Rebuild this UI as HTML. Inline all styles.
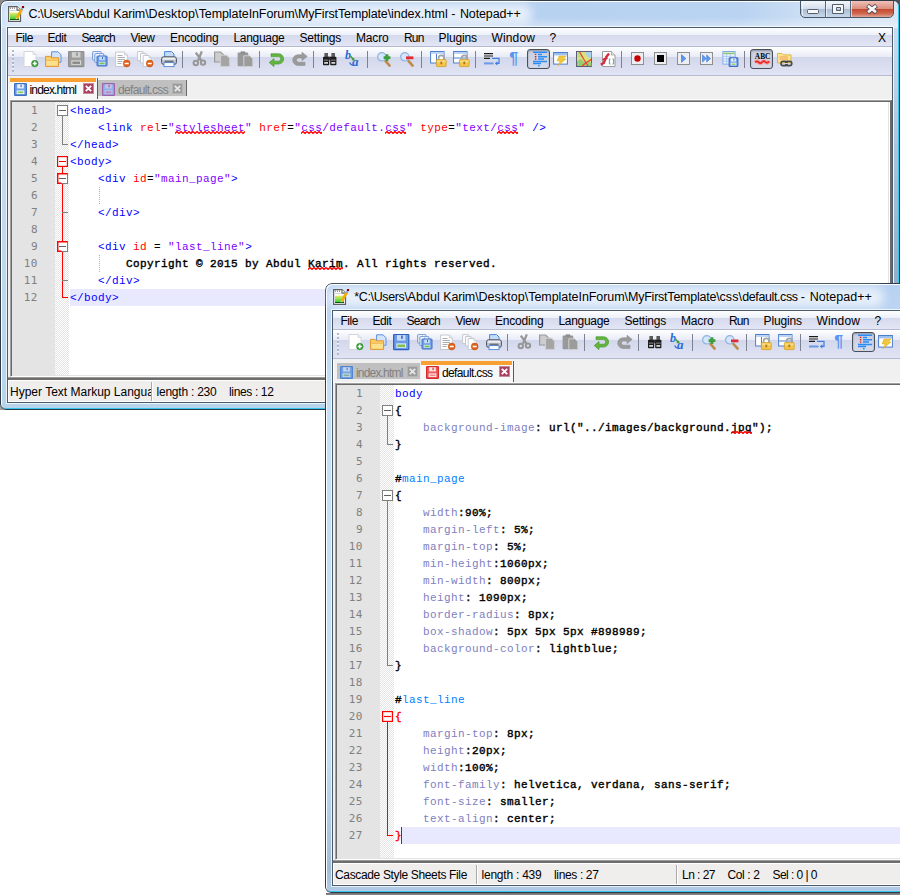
<!DOCTYPE html><html><head><meta charset="utf-8"><title>Notepad++</title><style>html,body{margin:0;padding:0}
body{width:900px;height:895px;overflow:hidden;background:#fff;position:relative;font-family:"Liberation Sans",sans-serif;font-size:12px;color:#000}
i{font-style:normal;display:block;position:absolute}
.win{position:absolute;overflow:hidden;border-radius:7px 7px 6px 6px}
.frame{position:absolute;left:0;top:0;right:0;bottom:0;box-sizing:border-box;border:1px solid #2f3b48;border-radius:7px 7px 6px 6px;
 box-shadow:inset 1px 1px 0 0 #fdfeff, inset -1px -1px 0 0 #35c6ee;
 background:linear-gradient(180deg,#dfeaf6 0,#d3e2f3 28px,#c3d9ee 120px,#b9d6ec 100%)}
#w1 .frame{background:linear-gradient(180deg,rgba(150,172,200,0) 0,rgba(150,172,200,.0) 20px,rgba(150,172,200,1) 280px) 893px 0/6px 100% no-repeat,linear-gradient(180deg,rgba(255,255,255,0) 0,rgba(255,255,255,0) 16px,rgba(255,255,255,.4) 27px) 0 0/100% 27px no-repeat,linear-gradient(90deg,#bcd5f2 0,#b7d1f1 560px,#b9d3f1 740px,#cbdef4 800px,#d9e6f6 880px) 0 0/100% 27px no-repeat,linear-gradient(180deg,#d6e4f4 0,#c9dcf1 28px,#c6dbf0 120px,#b6d5ec 100%)}
#w2 .frame{background:linear-gradient(180deg,#b7d1f1 0,#bdd5f2 28px,#c5dff6 120px,#c5dff6 470px,#a3bcd8 585px,#b2cce8 100%)}
.ticon{position:absolute;left:8px;top:6px}
.t{position:absolute;white-space:pre;line-height:16px;height:16px}
.ttl{font-size:12.5px}
.client{position:absolute;left:7px;top:27px;border:1px solid #4a5b6c;background:#f0f0f0;overflow:hidden;box-shadow:0 0 0 1px rgba(255,255,255,.75)}
.menubar{position:absolute;left:0;top:0;right:0;height:18px;background:linear-gradient(180deg,#fefeff 0,#ecf0f9 7px,#d5d9ec 7px,#e2e6f5 18px);border-bottom:1px solid #b6bad0}
.toolbar{position:absolute;left:0;top:19px;right:0;height:28px;background:linear-gradient(180deg,#ffffff 0,#e8ebf7 10px,#d3d7eb 10px,#e0e4f4 28px);border-bottom:1px solid #b6bad0}
.grip{left:4px;top:3px;width:3px;height:22px;background:repeating-linear-gradient(180deg,#b2b7cc 0,#b2b7cc 2px,rgba(255,255,255,.7) 2px,rgba(255,255,255,.7) 3px,transparent 3px,transparent 4px);width:2px}
.tabbar{position:absolute;left:0;top:48px;right:0;height:23px;background:#f0f0f0;border-left:1px solid #fff;border-bottom:1px solid #fbfbfb}
.tbi{position:absolute;left:0;top:0}
.ic{position:absolute;top:51px;overflow:visible}
.sep{top:51px;width:1px;height:17px;background:#7d8192}
.actbtn{top:49px;width:21px;height:18px;border:1px solid #4a4f5c;border-radius:3px;background:linear-gradient(180deg,#c9cfe0,#d6dbea);box-shadow:inset 0 1px 2px rgba(0,0,0,.3)}
.tab{position:absolute;box-sizing:border-box}
.tab.act{top:78px;height:21px;background:#f8f8f8;border-right:1px solid #5a5a5a}
.tab.act .or{left:0;top:0;right:1px;height:4px;background:#f9a033}
.tab.ina{top:80px;height:16px;background:#c0c0c0;border-right:1px solid #6a6a6a}
.tic{position:absolute;top:83px}
.tcl{position:absolute;top:83px}
.tb{font-size:12px}
.tbi2{color:#808080}
.edb{position:absolute;left:10px;top:100px;box-sizing:border-box;border:1px solid #a0a0a0;border-right:2px solid #6a6a6a;border-bottom-color:#fff;background:#fff;box-shadow:inset 1px 1px 0 0 #696969}
.ed{position:absolute;left:12px;top:102px;background:#fff;overflow:hidden;box-shadow:1px 0 0 #e3e3e3,0 1px 0 #e3e3e3}
.lnm{position:absolute;left:0;top:0;width:43px;background:#e4e4e4}
.fdm{position:absolute;left:43px;top:0;width:14px;background:repeating-conic-gradient(#ffffff 0 25%,#e4e4e4 0 50%) 0 0/2px 2px}
.cur{left:58px;right:0;height:17px;background:#e8e8ff}
.ln{position:absolute;left:0;width:26px;letter-spacing:.5px;text-align:right;font-family:"DejaVu Sans Mono",monospace;font-size:11px;line-height:17px;height:17px;color:#808080}
.cl{position:absolute;left:58px;margin-top:1px;white-space:pre;font-family:"Liberation Mono",monospace;font-size:11px;letter-spacing:.4px;line-height:17px;height:17px;color:#000}
.tg{color:#0000ff}.at{color:#ff0000}.st{color:#8000ff}.eq{color:#000}
.tx,.op,.vl,.br{font-weight:normal;color:#000;-webkit-text-stroke:.4px #000}
.br{color:#ff0000;-webkit-text-stroke:.4px #ff0000}
.pr{color:#8080c0}.idn{color:#0080ff}
.sq{position:relative;display:inline-block}.sqv{position:absolute;left:0;top:11px}
.caret{display:inline-block;position:relative;width:1px;height:17px;background:#8000ff;vertical-align:top;top:-1px;margin-left:-1px}
.ig{width:1px;background:repeating-linear-gradient(180deg,#b0b0b0 0,#b0b0b0 1px,transparent 1px,transparent 2px)}
.fold{position:absolute;left:43px;top:0;width:14px}
.fb{position:absolute;left:2px}
.fv{left:7px;width:1px}
.fh{left:7px;height:1px}
.sb{position:absolute;left:8px;height:24px;box-sizing:border-box;background:#f0eded;border-top:2px solid #828282;border-image:linear-gradient(180deg,#6c6c6c,#a4a4a4) 1;box-shadow:inset 0 1px 0 #fff, inset 0 -1px 0 #fff, inset 1px 0 0 #fff, 0 -1px 0 #9a9a9a}
.sbsep{top:2px;width:1px;height:19px;background:#a9a9a9;box-shadow:1px 0 0 #fff}
.sbclip{position:absolute;top:0;height:22px;overflow:hidden}
.capbtns{position:absolute;left:800px;top:0}
.glow{left:2px;top:4px;height:20px;background:rgba(255,255,255,.66);border-radius:9px;filter:blur(5px)}

.btm{left:326px;top:893px;width:575px;height:2px;background:linear-gradient(180deg,#6a6a6a,#8c8c8c)}
.brw{background:#fff;display:inline-block;height:17px;line-height:17px;position:relative;top:-1px;padding-top:1px;box-sizing:border-box;vertical-align:top}
.cnr{width:7px;height:7px}
</style></head><body><svg width="0" height="0" style="position:absolute"><defs><linearGradient id="gg" x1="0" y1="0" x2="0" y2="1"><stop offset="0" stop-color="#e4ec5a"/><stop offset=".35" stop-color="#a6e25a"/><stop offset=".8" stop-color="#4fd03a"/><stop offset=".86" stop-color="#0a6a0a"/><stop offset="1" stop-color="#005000"/></linearGradient></defs></svg><i class="cnr" style="left:0;top:0;background:#8a8a8a"></i><i class="cnr" style="left:893px;top:0;background:#4c5157"></i><i class="cnr" style="left:0;top:403px;background:#a0a0a0"></i><div class="win" id="w1" style="left:0px;top:0px;width:900px;height:410px"><div class="frame"></div><i class="glow" style="width:530px"></i><svg class="ticon" width="17" height="17" viewBox="0 0 17 17"><path d="M.6 .6h8.400l3.500 3.500v11.300h-11.900z" fill="#fff" stroke="#5f5f5f" stroke-width="1.200"/><path d="M9 .6v3.500h3.500" fill="#fff" stroke="#5f5f5f" stroke-width="1.100"/><circle cx="2.400" cy="2.100" r=".6" fill="#555"/><circle cx="4.400" cy="2.100" r=".6" fill="#555"/><circle cx="6.500" cy="2.100" r=".6" fill="#555"/><path d="M2 4.500h5.500" stroke="#c9d2da" stroke-width="1"/><rect x="2" y="6.700" width="9" height="7.300" fill="url(#gg)"/><path d="M8.700 12.300l5-8.800" stroke="#f6aa08" stroke-width="2.700"/><path d="M7.700 13.700l.300-2.200 1.900 1.100z" fill="#e8cf9a"/><path d="M7.700 13.700l.2-1 .8.500z" fill="#3a3020"/><path d="M13.500 3.900l.9-1.600" stroke="#8ea6c6" stroke-width="2.500"/><rect x="13.900" y="0" width="2.200" height="2.100" fill="#8a0000"/></svg><span class="t ttl" style="left:28.5px;top:6px;letter-spacing:-0.333px;">C:\Users\</span><span class="t ttl" style="left:77.6px;top:6px;letter-spacing:0.024px;">Abdul </span><span class="t ttl" style="left:113.2px;top:6px;letter-spacing:-0.138px;">Karim\</span><span class="t ttl" style="left:148.5px;top:6px;letter-spacing:0.107px;">Desktop\</span><span class="t ttl" style="left:198.7px;top:6px;letter-spacing:-0.096px;">TemplateInForum\</span><span class="t ttl" style="left:297.9px;top:6px;letter-spacing:-0.129px;">MyFirstTemplate\</span><span class="t ttl" style="left:391.0px;top:6px;letter-spacing:-0.023px;">index.html </span><span class="t ttl" style="left:451.2px;top:6px;letter-spacing:0.530px;">- </span><span class="t ttl" style="left:459.9px;top:6px;letter-spacing:-0.118px;">Notepad++</span><svg class="capbtns" width="94" height="19" viewBox="0 0 94 19"><defs><linearGradient id="cg1" x1="0" y1="0" x2="0" y2="1"><stop offset="0" stop-color="#f3f7fb"/><stop offset=".48" stop-color="#d3deec"/><stop offset=".5" stop-color="#a9bcd4"/><stop offset="1" stop-color="#c9d8ea"/></linearGradient><linearGradient id="cg2" x1="0" y1="0" x2="0" y2="1"><stop offset="0" stop-color="#efc0b6"/><stop offset=".48" stop-color="#dc8f80"/><stop offset=".5" stop-color="#c4472c"/><stop offset=".8" stop-color="#cf6a52"/><stop offset="1" stop-color="#e3a898"/></linearGradient><clipPath id="cc"><path d="M1 1h92v12a4 4 0 0 1-4 4h-84a4 4 0 0 1-4-4z"/></clipPath></defs><g clip-path="url(#cc)"><rect x="1" y="1" width="50" height="16" fill="url(#cg1)"/><rect x="51" y="1" width="42" height="16" fill="url(#cg2)"/><path d="M1.500 1v16M25.500 1v16M50.500 1v16" stroke="#f4f8fc" stroke-width="1" opacity=".7" transform="translate(1,0)"/></g><path d="M.5 1v12a4.500 4.500 0 0 0 4.500 4.500h84a4.500 4.500 0 0 0 4.500-4.500v-12" fill="none" stroke="#48566a" stroke-width="1"/><path d="M25.500 1v16.500M50.500 1v16.500" stroke="#5a687c" stroke-width="1"/><rect x="7.500" y="9.500" width="11" height="4" rx="1" fill="#f6f6f6" stroke="#535e6e" stroke-width="1"/><path d="M32.500 4.500h11v9h-11zM36.500 7.500v3h4v-3z" fill="#f6f6f6" fill-rule="evenodd" stroke="#535e6e" stroke-width="1"/><path d="M67.500 5.500l9 7M76.500 5.500l-9 7" stroke="#4e4450" stroke-width="4.400"/><path d="M68 5.900l8 6.200M76 5.900l-8 6.200" stroke="#f8f8f8" stroke-width="2.600"/></svg><div class="client" style="width:884px;height:374px"><div class="menubar"></div><div class="toolbar"><i class="grip"></i></div><div class="tabbar"></div></div><span class="t mn" style="left:15.5px;top:30px;letter-spacing:-0.461px;">File</span><span class="t mn" style="left:47.5px;top:30px;letter-spacing:-0.422px;">Edit</span><span class="t mn" style="left:81.5px;top:30px;letter-spacing:-0.755px;">Search</span><span class="t mn" style="left:130.5px;top:30px;letter-spacing:-0.449px;">View</span><span class="t mn" style="left:170px;top:30px;letter-spacing:-0.193px;">Encoding</span><span class="t mn" style="left:233.5px;top:30px;letter-spacing:-0.299px;">Language</span><span class="t mn" style="left:299.5px;top:30px;letter-spacing:-0.232px;">Settings</span><span class="t mn" style="left:356px;top:30px;letter-spacing:-0.169px;">Macro</span><span class="t mn" style="left:404px;top:30px;letter-spacing:-0.839px;">Run</span><span class="t mn" style="left:438.5px;top:30px;letter-spacing:-0.123px;">Plugins</span><span class="t mn" style="left:491.5px;top:30px;letter-spacing:0.135px;">Window</span><span class="t mn" style="left:549.5px;top:30px;letter-spacing:-2.188px;">?</span><span class="t mn" style="left:878px;top:30px;letter-spacing:0.484px;">X</span><div class="tbi"><svg class="ic" style="left:23px" width="16" height="16" viewBox="0 0 16 16"><path d="M1 0.5h9l3 3v12h-12z" fill="#ffffff" stroke="#d4d6dc" stroke-width="1"/><path d="M10 0.5v3h3" fill="#e8e8e8" stroke="#d4d6dc" stroke-width=".8"/><circle cx="11.8" cy="12.6" r="3.3" fill="#3c9e38" stroke="#2f8030" stroke-width=".5"/><path d="M9.800 12.600h4M11.800 10.600v4" stroke="#fff" stroke-width="1.500"/></svg><svg class="ic" style="left:46px" width="16" height="16" viewBox="0 0 16 16"><path d="M5.600 .8h6.400l3 3v7.400h-9.400z" fill="#d3e3fb" stroke="#5f90dc" stroke-width="1"/><path d="M-.4 5.400h4.600l1.200 1.400h7.200v8.600h-13z" fill="#f8cf6a" stroke="#e0962c" stroke-width="1"/><path d="M.4 9.400h11.400v5.200h-11.400z" fill="#fbe08e"/><path d="M.4 9.400h11.400" stroke="#f3b44c" stroke-width=".8"/></svg><svg class="ic" style="left:69px" width="16" height="16" viewBox="0 0 16 16"><rect x="-0.4" y="0.5" width="15.2" height="15.2" rx=".6" fill="#9c9c9c" stroke="#8f8f8f" stroke-width="1.2"/><rect x="2.94" y="1.1" width="8.51" height="5.47" fill="#d8d8d8" opacity=".85"/><rect x="7.20" y="1.5" width="1.52" height="3.34" fill="#8f8f8f"/><rect x="2.34" y="9.32" width="9.73" height="4.56" fill="#d8d8d8"/><rect x="3.40" y="10.53" width="7.60" height="2.43" fill="#8a8a8a"/></svg><svg class="ic" style="left:92px" width="16" height="16" viewBox="0 0 16 16"><rect x="0.6" y="0.6" width="8.5" height="8.5" rx=".6" fill="#e6eefa" stroke="#6a92d4" stroke-width="0.9"/><rect x="2.47" y="1.2" width="4.76" height="3.06" fill="#ffffff" opacity=".85"/><rect x="4.85" y="1.6" width="0.85" height="1.87" fill="#6a92d4"/><rect x="2.13" y="5.53" width="5.44" height="2.55" fill="#ffffff"/><rect x="2.73" y="6.21" width="4.25" height="1.36" fill="#e6eefa"/><rect x="2.8" y="2.6" width="9" height="9" rx=".6" fill="#e6eefa" stroke="#6a92d4" stroke-width="0.9"/><rect x="4.78" y="3.2" width="5.04" height="3.24" fill="#ffffff" opacity=".85"/><rect x="7.30" y="3.6" width="0.90" height="1.98" fill="#6a92d4"/><rect x="4.42" y="7.82" width="5.76" height="2.70" fill="#ffffff"/><rect x="5.05" y="8.54" width="4.50" height="1.44" fill="#e6eefa"/><rect x="5" y="5" width="10" height="10" rx=".6" fill="#6f9fe6" stroke="#3f72c4" stroke-width="1"/><rect x="7.20" y="5.6" width="5.60" height="3.60" fill="#d8e6fa" opacity=".85"/><rect x="10.00" y="6" width="1.00" height="2.20" fill="#3f72c4"/><rect x="6.80" y="10.80" width="6.40" height="3.00" fill="#d8e6fa"/><rect x="7.50" y="11.60" width="5.00" height="1.60" fill="#7cc04a"/></svg><svg class="ic" style="left:115px" width="16" height="16" viewBox="0 0 16 16"><path d="M0.6 1h8.8l3 3v11.5h-11.8z" fill="#ffffff" stroke="#c6c8cf" stroke-width="1"/><path d="M9.4 1v3h3" fill="#e8e8e8" stroke="#c6c8cf" stroke-width=".8"/><path d="M2.500 4.500h5M2.500 6.500h7.500M2.500 8.500h7.500M2.500 10.500h5M2.500 12.500h4" stroke="#a4a4a8" stroke-width=".9"/><circle cx="11.700" cy="12.500" r="3.400" fill="#e4631a" stroke="#c0500e" stroke-width=".6"/><path d="M9.700 12.500h4" stroke="#fff" stroke-width="1.500"/></svg><svg class="ic" style="left:138px" width="16" height="16" viewBox="0 0 16 16"><path d="M-0.4 0.6h5.3l2.2 2.2v6.8h-7.5z" fill="#ffffff" stroke="#c6c8cf" stroke-width="1"/><path d="M4.8999999999999995 0.6v2.2h2.2" fill="#e8e8e8" stroke="#c6c8cf" stroke-width=".8"/><path d="M2.5 2.5h5.3l2.2 2.2v7.3h-7.5z" fill="#ffffff" stroke="#c6c8cf" stroke-width="1"/><path d="M7.8 2.5v2.2h2.2" fill="#e8e8e8" stroke="#c6c8cf" stroke-width=".8"/><path d="M5.2 4.5h5.8l2.2 2.2v8.8h-8z" fill="#ffffff" stroke="#c6c8cf" stroke-width="1"/><path d="M11.0 4.5v2.2h2.2" fill="#e8e8e8" stroke="#c6c8cf" stroke-width=".8"/><circle cx="11.700" cy="12.500" r="3.400" fill="#e4631a" stroke="#c0500e" stroke-width=".6"/><path d="M9.700 12.500h4" stroke="#fff" stroke-width="1.500"/></svg><svg class="ic" style="left:161px" width="16" height="16" viewBox="0 0 16 16"><path d="M3.600 .6h7l2.400 2.400v4h-9.400z" fill="#c4dcfa" stroke="#4f86d8" stroke-width="1"/><rect x=".6" y="5.800" width="14.800" height="7.600" rx="2" fill="#c4c8d0" stroke="#4a505c" stroke-width="1"/><rect x="1.600" y="6.800" width="12.800" height="2" rx="1" fill="#eceef2"/><rect x="3" y="11.600" width="10" height="4" fill="#f8fbff" stroke="#4f86d8" stroke-width=".9"/><rect x="3.600" y="9.600" width="8.800" height="1.600" fill="#6a707c"/></svg><i class="sep" style="left:182px"></i><svg class="ic" style="left:192px" width="16" height="16" viewBox="0 0 16 16"><path d="M9.800 .4L6 9.800M3.800 1.600l5.800 8" stroke="#979797" stroke-width="2.300" fill="none"/><circle cx="3.800" cy="12" r="2.200" fill="none" stroke="#979797" stroke-width="2"/><circle cx="11" cy="11.600" r="2.200" fill="none" stroke="#979797" stroke-width="2"/></svg><svg class="ic" style="left:215px" width="16" height="16" viewBox="0 0 16 16"><path d="M-.4 1h6l3 3v7h-9z" fill="#cdcdcd" stroke="#9a9a9a" stroke-width="1.200"/><path d="M5.600 4.200h6l3 3v8.200h-9z" fill="#a4a4a4" stroke="#cfcfcf" stroke-width="1"/></svg><svg class="ic" style="left:238px" width="16" height="16" viewBox="0 0 16 16"><rect x="-.4" y="1.400" width="10.600" height="13.800" rx="1" fill="#999999"/><rect x="2.600" y=".4" width="4.600" height="2.400" fill="#8c8c8c"/><path d="M5.800 4.800h6l3 3v7.800h-9z" fill="#9c9c9c" stroke="#d0d0d0" stroke-width="1"/></svg><i class="sep" style="left:259px"></i><svg class="ic" style="left:269px" width="16" height="16" viewBox="0 0 16 16"><path d="M.2 11.600L5 7.600V10.200H9.500A2.300 2.300 0 0 0 9.500 5.600H2V2.800H9.500A5.100 5.100 0 0 1 9.500 13H5V15.600Z" fill="#63b53e" stroke="#479a2c" stroke-width=".7"/></svg><svg class="ic" style="left:292px" width="16" height="16" viewBox="0 0 16 16"><path d="M15.200 5.400L10 1.200V3.800H6A5.300 5.300 0 0 0 6 14.400H13V11.200H6.500A2.100 2.100 0 0 1 6.500 7H10V9.600Z" fill="#9a9a9a" stroke="#8e8e8e" stroke-width=".6"/></svg><i class="sep" style="left:313px"></i><svg class="ic" style="left:323px" width="16" height="16" viewBox="0 0 16 16"><rect x="1.400" y="2" width="3.600" height="4.400" fill="#5a5a5a"/><rect x="8.400" y="2" width="3.600" height="4.400" fill="#5a5a5a"/><rect x="5.200" y="5.600" width="3" height="3.600" fill="#444"/><rect x="0" y="5.800" width="6.200" height="8.400" rx=".8" fill="#1c1c1c"/><rect x="7.200" y="5.800" width="6.200" height="8.400" rx=".8" fill="#1c1c1c"/><rect x=".8" y="8.600" width="4.600" height="1" fill="#8a8a8a"/><rect x="8" y="8.600" width="4.600" height="1" fill="#8a8a8a"/><rect x="1.200" y="11" width="3.800" height="1.800" fill="#d4d4d4"/><rect x="8.400" y="11" width="3.800" height="1.800" fill="#d4d4d4"/></svg><svg class="ic" style="left:346px" width="16" height="16" viewBox="0 0 16 16"><text x="-1" y="7.800" font-family="Liberation Serif,serif" font-size="12" font-weight="bold" font-style="italic" fill="#2a6ad8">b</text><text x="6" y="15" font-family="Liberation Serif,serif" font-size="13" font-weight="bold" font-style="italic" fill="#2a6ad8">a</text><path d="M4.400 5l3 3.400" stroke="#3f9a3a" stroke-width="1.500"/><path d="M8.800 9.800l-3.400-.8 2.600-2.400z" fill="#3f9a3a"/><path d="M3.600 11.500q1.600 3.400 4.200 2.600" stroke="#2a6ad8" stroke-width="1.200" fill="none"/></svg><i class="sep" style="left:367px"></i><svg class="ic" style="left:377px" width="16" height="16" viewBox="0 0 16 16"><circle cx="4.800" cy="5.800" r="4.200" fill="#d3e6fb" stroke="#8fb2e0" stroke-width="1.200"/><path d="M8.600 10.200l4 4.400" stroke="#bd8c48" stroke-width="2.600" stroke-linecap="round"/><path d="M6.600 6.600h6.800M10 3.200v6.800" stroke="#3c9e3c" stroke-width="2.800"/></svg><svg class="ic" style="left:400px" width="16" height="16" viewBox="0 0 16 16"><circle cx="4.800" cy="5.800" r="4.200" fill="#d3e6fb" stroke="#8fb2e0" stroke-width="1.200"/><path d="M8.600 10.200l4 4.400" stroke="#bd8c48" stroke-width="2.600" stroke-linecap="round"/><path d="M6 6.800h7.400" stroke="#e02a34" stroke-width="2.800"/></svg><i class="sep" style="left:421px"></i><svg class="ic" style="left:431px" width="16" height="16" viewBox="0 0 16 16"><rect x="-.4" y=".5" width="13.400" height="11.500" fill="#fff" stroke="#4f7fcf" stroke-width="1"/><rect x=".1" y="1" width="12.400" height="2" fill="#bcd5f4"/><path d="M5.500 3v9" stroke="#4f7fcf" stroke-width="1"/><path d="M7.6000000000000005 9.0v-2a2.700 2.700 0 0 1 5.400 0v2" fill="none" stroke="#a4a4a4" stroke-width="1.700"/><rect x="5.4" y="8.6" width="9.800" height="7" rx=".8" fill="#f4c44a" stroke="#d39e22" stroke-width=".8"/><rect x="6.2" y="9.399999999999999" width="8.200" height="2" fill="#f9dc8a"/><rect x="9.4" y="10.6" width="1.800" height="2.600" fill="#a87b10"/></svg><svg class="ic" style="left:454px" width="16" height="16" viewBox="0 0 16 16"><rect x="-.4" y=".5" width="13.400" height="11.500" fill="#fff" stroke="#4f7fcf" stroke-width="1"/><rect x=".1" y="1" width="12.400" height="2" fill="#bcd5f4"/><path d="M-.4 7h13.400" stroke="#4f7fcf" stroke-width="1"/><path d="M7.6000000000000005 9.0v-2a2.700 2.700 0 0 1 5.400 0v2" fill="none" stroke="#a4a4a4" stroke-width="1.700"/><rect x="5.4" y="8.6" width="9.800" height="7" rx=".8" fill="#f4c44a" stroke="#d39e22" stroke-width=".8"/><rect x="6.2" y="9.399999999999999" width="8.200" height="2" fill="#f9dc8a"/><rect x="9.4" y="10.6" width="1.800" height="2.600" fill="#a87b10"/></svg><i class="sep" style="left:475px"></i><svg class="ic" style="left:485px" width="16" height="16" viewBox="0 0 16 16"><path d="M-1 2.600h9M-1 5h9M-1 7.400h6" stroke="#1a1a1a" stroke-width="1.200"/><path d="M-1 12.400h9.500" stroke="#6b9be6" stroke-width="2"/><path d="M7 7.400h7v5h-2.500" fill="none" stroke="#3f7be0" stroke-width="1.200"/><path d="M9.800 12.400l2.600-2.200v4.400z" fill="#3f7be0"/></svg><svg class="ic" style="left:508px" width="16" height="16" viewBox="0 0 16 16"><text x="1.200" y="13.400" font-family="Liberation Sans,sans-serif" font-size="16" font-weight="bold" fill="#5896f2">¶</text></svg><i class="actbtn" style="left:527px"></i><svg class="ic" style="left:531px" width="16" height="16" viewBox="0 0 16 16"><path d="M2 1.300h14M7 3.500h4M7 5.700h9M7 8h6M2 10.400h14M2 12.600h8M7 14.700h1.600" stroke="#2a8cf8" stroke-width="1.500"/><path d="M4.600 2.800v7" stroke="#e01919" stroke-width="1.500" stroke-dasharray="1.300 1"/></svg><svg class="ic" style="left:554px" width="16" height="16" viewBox="0 0 16 16"><rect x="-.4" y="1.500" width="13.800" height="11.600" fill="#fff" stroke="#4b7dcd" stroke-width="1"/><rect x=".1" y="2" width="12.800" height="2.400" fill="#9dc0f0"/><path d="M5 5h7l-2.600 3h2.600l-8 6.800 2.200-4.800h-3.200z" fill="#f0c83c" stroke="#d8a820" stroke-width=".5"/></svg><svg class="ic" style="left:577px" width="16" height="16" viewBox="0 0 16 16"><rect x="-.5" y=".5" width="15" height="15" fill="#dbe27a" stroke="#50506e" stroke-width=".9"/><path d="M0 10l4-2 3 3 4-1 3.500 2v3h-14.500z" fill="#98cc74"/><path d="M8 1h6.500v5.500l-3 .5-2-3z" fill="#a9d2ee"/><path d="M0 1h4l2 4-3 2-3-1z" fill="#c4dc84"/><path d="M2.600 1l4 7 4.400 7M14 8.600l-5 3.200-4 3.200" stroke="#e8483a" stroke-width="1.300" fill="none"/></svg><svg class="ic" style="left:600px" width="16" height="16" viewBox="0 0 16 16"><path d="M2.5 0.5h9.0l3.5 3.5v11.5h-12.5z" fill="#ffffff" stroke="#9c9c9c" stroke-width="1"/><path d="M11.5 0.5v3.5h3.5" fill="#e8e8e8" stroke="#9c9c9c" stroke-width=".8"/><path d="M.8 13.600l3-1.600 2.400-6 2.800-3.600" fill="none" stroke="#dc2a3a" stroke-width="2.400"/><path d="M2.600 8.600l5-1.600" stroke="#dc2a3a" stroke-width="1.800"/><path d="M10.600 8h-1.200v5h1.200M12.400 8h1.200v5h-1.200" fill="none" stroke="#7a9a98" stroke-width="1"/></svg><i class="sep" style="left:621px"></i><svg class="ic" style="left:631px" width="16" height="16" viewBox="0 0 16 16"><rect x=".5" y="1.500" width="12" height="12" fill="#eeeef2" stroke="#8e8e8e" stroke-width="1"/><g transform="translate(-1.500,-.5)"><circle cx="8" cy="8" r="3.200" fill="#c80000"/></g></svg><svg class="ic" style="left:654px" width="16" height="16" viewBox="0 0 16 16"><rect x=".5" y="1.500" width="12" height="12" fill="#eeeef2" stroke="#8e8e8e" stroke-width="1"/><g transform="translate(-1.500,-.5)"><rect x="4.500" y="4.500" width="7" height="7" fill="#000"/></g></svg><svg class="ic" style="left:677px" width="16" height="16" viewBox="0 0 16 16"><rect x=".5" y="1.500" width="12" height="12" fill="#eeeef2" stroke="#8e8e8e" stroke-width="1"/><g transform="translate(-1.500,-.5)"><path d="M6 4.200l4.400 3.800-4.400 3.800z" fill="#5c9af2" stroke="#3a78d8" stroke-width=".7"/></g></svg><svg class="ic" style="left:700px" width="16" height="16" viewBox="0 0 16 16"><rect x=".5" y="1.500" width="12" height="12" fill="#eeeef2" stroke="#8e8e8e" stroke-width="1"/><g transform="translate(-1.500,-.5)"><path d="M4 4.400l3.800 3.600-3.800 3.600zM8.200 4.400l3.800 3.600-3.800 3.600z" fill="#5c9af2" stroke="#3a78d8" stroke-width=".6"/></g></svg><svg class="ic" style="left:723px" width="16" height="16" viewBox="0 0 16 16"><rect x="-.1" y=".5" width="12.200" height="12.600" fill="#eef4fd" stroke="#82aae4" stroke-width="1"/><rect x=".4" y="1.600" width="11.200" height="1.600" fill="#8cc672"/><path d="M-.1 5.400h12.200M-.1 7.800h12.200M-.1 10.200h12.200M3.600 3.200v9.900M7.400 3.200v9.900" stroke="#9fc0ec" stroke-width=".8"/><rect x="6.2" y="6.8" width="8.6" height="8.6" rx=".6" fill="#7aa7e8" stroke="#3f6fc0" stroke-width="1.2"/><rect x="8.09" y="7.3999999999999995" width="4.82" height="3.10" fill="#ffffff" opacity=".85"/><rect x="10.50" y="7.8" width="0.86" height="1.89" fill="#3f6fc0"/><rect x="7.75" y="11.79" width="5.50" height="2.58" fill="#ffffff"/><rect x="8.35" y="12.48" width="4.30" height="1.38" fill="#8fca62"/></svg><i class="sep" style="left:744px"></i><i class="actbtn" style="left:750px"></i><svg class="ic" style="left:754px" width="16" height="16" viewBox="0 0 16 16"><text x="8.600" y="8" text-anchor="middle" font-family="Liberation Serif,serif" font-size="8.500" font-weight="bold" fill="#000" textLength="15.600" lengthAdjust="spacingAndGlyphs">ABC</text><path d="M1.200 11.600q1.700-2.400 3.400-.4t3.400 0 3.400-.2 3.800-.8" fill="none" stroke="#f4a0a0" stroke-width="4"/><path d="M1.200 11.600q1.700-2.400 3.400-.4t3.400 0 3.400-.2 3.800-.8" fill="none" stroke="#ea2a2a" stroke-width="1.800"/></svg><svg class="ic" style="left:777px" width="16" height="16" viewBox="0 0 16 16"><path d="M.5 2.500h4.500l1.200 1.400h7.800v8h-13.500z" fill="#fbe49a" stroke="#dcb83c" stroke-width="1"/><path d="M2.500 6h8.500M2.500 8h8.500" stroke="#f0a04a" stroke-width="1"/><rect x="4" y="10.400" width="6.200" height="4.200" rx="2.100" fill="none" stroke="#4a4a4a" stroke-width="1.600"/><rect x="8.600" y="10.400" width="6.200" height="4.200" rx="2.100" fill="none" stroke="#4a4a4a" stroke-width="1.600"/><path d="M7 12.500h4.600" stroke="#d8d8d8" stroke-width="1"/></svg></div><div class="tab act" style="left:10px;width:88px"><i class="or"></i></div><div class="tab ina" style="left:98px;width:89px"></div><svg class="tic" style="left:14px" width="13" height="13" viewBox="0 0 13 13"><rect x="0.6" y="0.6" width="11.8" height="11.8" rx=".6" fill="#6f9fe6" stroke="#3f6fc0" stroke-width="1.2"/><rect x="3.20" y="1.2" width="6.61" height="4.25" fill="#ffffff" opacity=".85"/><rect x="6.50" y="1.6" width="1.18" height="2.60" fill="#3f6fc0"/><rect x="2.72" y="7.44" width="7.55" height="3.54" fill="#ffffff"/><rect x="3.55" y="8.39" width="5.90" height="1.89" fill="#8fca62"/></svg><span class="t tb" style="left:29.5px;top:82px;letter-spacing:-0.820px;">index.html</span><svg class="tcl" style="left:83px" width="11" height="11" viewBox="0 0 11 11"><rect width="11" height="11" fill="#c58a9c"/><rect x="1" y="1" width="9" height="9" fill="#a8405e"/><path d="M2.800 2.800l5.400 5.400M8.200 2.800l-5.400 5.400" stroke="#fff" stroke-width="1.900"/></svg><svg class="tic" style="left:102px" width="13" height="13" viewBox="0 0 13 13"><rect x="0.6" y="0.6" width="11.8" height="11.8" rx=".6" fill="#92b2ea" stroke="#a060ac" stroke-width="1.2"/><rect x="3.20" y="1.2" width="6.61" height="4.25" fill="#cdc4e6" opacity=".85"/><rect x="6.50" y="1.6" width="1.18" height="2.60" fill="#a060ac"/><rect x="2.72" y="7.44" width="7.55" height="3.54" fill="#cdc4e6"/><rect x="3.55" y="8.39" width="5.90" height="1.89" fill="#b088c4"/></svg><span class="t tb tbi2" style="left:118px;top:82px;letter-spacing:-0.670px;">default.css</span><svg class="tcl" style="left:172px" width="11" height="11" viewBox="0 0 11 11"><rect width="11" height="11" fill="#b4b4b4"/><rect x="1" y="1" width="9" height="9" fill="#9c9c9c"/><path d="M2.800 2.800l5.400 5.400M8.200 2.800l-5.400 5.400" stroke="#e6e6e6" stroke-width="1.900"/></svg><div class="edb" style="width:882px;height:277px"></div><div class="ed" style="width:876px;height:273px"><div class="lnm" style="height:273px"></div><div class="fdm" style="height:273px"></div><i class="cur" style="top:187px"></i><span class="ln" style="top:0px">1</span><span class="cl" style="top:0px"><span class="tg">&lt;head&gt;</span></span><span class="ln" style="top:17px">2</span><span class="cl" style="top:17px">    <span class="tg">&lt;link</span> <span class="at">rel</span><span class="eq">=</span><span class="st">&quot;</span><span class="sq"><span class="st">stylesheet</span><svg class="sqv" width="70" height="3" viewBox="0 0 70 3"><path d="M0 2.500L2 0.5L4 2.5L6 0.5L8 2.5L10 0.5L12 2.5L14 0.5L16 2.5L18 0.5L20 2.5L22 0.5L24 2.5L26 0.5L28 2.5L30 0.5L32 2.5L34 0.5L36 2.5L38 0.5L40 2.5L42 0.5L44 2.5L46 0.5L48 2.5L50 0.5L52 2.5L54 0.5L56 2.5L58 0.5L60 2.5L62 0.5L64 2.5L66 0.5L68 2.5L70 0.5" fill="none" stroke="#ff0000" stroke-width="1.3"/></svg></span><span class="st">&quot;</span> <span class="at">href</span><span class="eq">=</span><span class="st">&quot;</span><span class="sq"><span class="st">css</span><svg class="sqv" width="21" height="3" viewBox="0 0 21 3"><path d="M0 2.500L2 0.5L4 2.5L6 0.5L8 2.5L10 0.5L12 2.5L14 0.5L16 2.5L18 0.5L20 2.5L22 0.5" fill="none" stroke="#ff0000" stroke-width="1.3"/></svg></span><span class="st">/default.</span><span class="sq"><span class="st">css</span><svg class="sqv" width="21" height="3" viewBox="0 0 21 3"><path d="M0 2.500L2 0.5L4 2.5L6 0.5L8 2.5L10 0.5L12 2.5L14 0.5L16 2.5L18 0.5L20 2.5L22 0.5" fill="none" stroke="#ff0000" stroke-width="1.3"/></svg></span><span class="st">&quot;</span> <span class="at">type</span><span class="eq">=</span><span class="st">&quot;text/</span><span class="sq"><span class="st">css</span><svg class="sqv" width="21" height="3" viewBox="0 0 21 3"><path d="M0 2.500L2 0.5L4 2.5L6 0.5L8 2.5L10 0.5L12 2.5L14 0.5L16 2.5L18 0.5L20 2.5L22 0.5" fill="none" stroke="#ff0000" stroke-width="1.3"/></svg></span><span class="st">&quot;</span> <span class="tg">/&gt;</span></span><span class="ln" style="top:34px">3</span><span class="cl" style="top:34px"><span class="tg">&lt;/head&gt;</span></span><span class="ln" style="top:51px">4</span><span class="cl" style="top:51px"><span class="tg">&lt;body&gt;</span></span><span class="ln" style="top:68px">5</span><span class="cl" style="top:68px">    <span class="tg">&lt;div</span> <span class="at">id</span><span class="eq">=</span><span class="st">&quot;main_page&quot;</span><span class="tg">&gt;</span></span><span class="ln" style="top:85px">6</span><span class="ln" style="top:102px">7</span><span class="cl" style="top:102px">    <span class="tg">&lt;/div&gt;</span></span><span class="ln" style="top:119px">8</span><span class="ln" style="top:136px">9</span><span class="cl" style="top:136px">    <span class="tg">&lt;div</span> <span class="at">id</span> <span class="eq">=</span> <span class="st">&quot;last_line&quot;</span><span class="tg">&gt;</span></span><span class="ln" style="top:153px">10</span><span class="cl" style="top:153px">        <span class="tx">Copyright © 2015 by Abdul </span><span class="sq"><span class="tx">Karim</span><svg class="sqv" width="35" height="3" viewBox="0 0 35 3"><path d="M0 2.500L2 0.5L4 2.5L6 0.5L8 2.5L10 0.5L12 2.5L14 0.5L16 2.5L18 0.5L20 2.5L22 0.5L24 2.5L26 0.5L28 2.5L30 0.5L32 2.5L34 0.5L36 2.5" fill="none" stroke="#ff0000" stroke-width="1.3"/></svg></span><span class="tx">. All rights reserved.</span></span><span class="ln" style="top:170px">11</span><span class="cl" style="top:170px">    <span class="tg">&lt;/div&gt;</span></span><span class="ln" style="top:187px">12</span><span class="cl" style="top:187px"><span class="tg">&lt;/body&gt;</span></span><i class="ig" style="left:87px;top:85px;height:17px"></i><i class="ig" style="left:87px;top:153px;height:17px"></i><div class="fold"><i class="fv" style="top:13px;height:30px;background:#808080"></i><i class="fh" style="top:42px;width:6px;background:#808080"></i><svg class="fb" style="top:3px" width="11" height="11" viewBox="0 0 11 11"><rect x=".5" y=".5" width="10" height="10" fill="#fff" stroke="#808080" stroke-width="1"/><path d="M2 5.500h7" stroke="#606060" stroke-width="1.200"/></svg><i class="fv" style="top:64px;height:132px;background:#ff0000"></i><i class="fh" style="top:195px;width:6px;background:#ff0000"></i><i class="fh" style="top:110px;width:6px;background:#808080"></i><i class="fh" style="top:178px;width:6px;background:#808080"></i><svg class="fb" style="top:54px" width="11" height="11" viewBox="0 0 11 11"><rect x=".5" y=".5" width="10" height="10" fill="#fff" stroke="#ff0000" stroke-width="1.4"/><path d="M2 5.500h7" stroke="#ff0000" stroke-width="1.200"/></svg><svg class="fb" style="top:71px" width="11" height="11" viewBox="0 0 11 11"><rect x=".5" y=".5" width="10" height="10" fill="#fff" stroke="#808080" stroke-width="1"/><path d="M4.500 10.300h-3.800v-9.500h9.700" fill="none" stroke="#ff0000" stroke-width="1.500"/><path d="M2 5.500h7" stroke="#606060" stroke-width="1.200"/></svg><svg class="fb" style="top:139px" width="11" height="11" viewBox="0 0 11 11"><rect x=".5" y=".5" width="10" height="10" fill="#fff" stroke="#808080" stroke-width="1"/><path d="M4.500 10.300h-3.800v-9.500h9.700" fill="none" stroke="#ff0000" stroke-width="1.500"/><path d="M2 5.500h7" stroke="#606060" stroke-width="1.200"/></svg></div></div><div class="sb" style="top:378px;width:884px"><i class="sbsep" style="left:143px"></i><span class="sbclip" style="left:2px;width:141px"><span class="t st_" style="left:0px;top:4px;">Hyper Text Markup Langua</span></span><span class="t st_" style="left:148.5px;top:4px;letter-spacing:-0.227px;">length : 230</span><span class="t st_" style="left:221px;top:4px;letter-spacing:-0.353px;">lines : 12</span></div></div><div class="win" id="w2" style="left:325px;top:283px;width:700px;height:610px"><div class="frame"></div><i class="glow" style="width:557px"></i><svg class="ticon" width="17" height="17" viewBox="0 0 17 17"><path d="M.6 .6h8.400l3.500 3.500v11.300h-11.900z" fill="#fff" stroke="#5f5f5f" stroke-width="1.200"/><path d="M9 .6v3.500h3.500" fill="#fff" stroke="#5f5f5f" stroke-width="1.100"/><circle cx="2.400" cy="2.100" r=".6" fill="#555"/><circle cx="4.400" cy="2.100" r=".6" fill="#555"/><circle cx="6.500" cy="2.100" r=".6" fill="#555"/><path d="M2 4.500h5.500" stroke="#c9d2da" stroke-width="1"/><rect x="2" y="6.700" width="9" height="7.300" fill="url(#gg)"/><path d="M8.700 12.300l5-8.800" stroke="#f6aa08" stroke-width="2.700"/><path d="M7.700 13.700l.300-2.200 1.900 1.100z" fill="#e8cf9a"/><path d="M7.700 13.700l.2-1 .8.500z" fill="#3a3020"/><path d="M13.500 3.900l.9-1.600" stroke="#8ea6c6" stroke-width="2.500"/><rect x="13.900" y="0" width="2.200" height="2.100" fill="#8a0000"/></svg><span class="t ttl" style="left:29.3px;top:6px;letter-spacing:-0.365px;">*C:\Users\</span><span class="t ttl" style="left:82.6px;top:6px;letter-spacing:0.024px;">Abdul </span><span class="t ttl" style="left:118.2px;top:6px;letter-spacing:-0.138px;">Karim\</span><span class="t ttl" style="left:153.5px;top:6px;letter-spacing:0.057px;">Desktop\</span><span class="t ttl" style="left:203.3px;top:6px;letter-spacing:-0.065px;">TemplateInForum\</span><span class="t ttl" style="left:303.0px;top:6px;letter-spacing:-0.229px;">MyFirstTemplate\</span><span class="t ttl" style="left:394.5px;top:6px;letter-spacing:0.116px;">css\</span><span class="t ttl" style="left:417.2px;top:6px;letter-spacing:-0.395px;">default.css </span><span class="t ttl" style="left:475.7px;top:6px;letter-spacing:0.680px;">- </span><span class="t ttl" style="left:484.7px;top:6px;letter-spacing:0.038px;">Notepad++</span><div class="client" style="width:684px;height:574px"><div class="menubar"></div><div class="toolbar"><i class="grip"></i></div><div class="tabbar"></div></div><span class="t mn" style="left:15.5px;top:30px;letter-spacing:-0.461px;">File</span><span class="t mn" style="left:47.5px;top:30px;letter-spacing:-0.422px;">Edit</span><span class="t mn" style="left:81.5px;top:30px;letter-spacing:-0.755px;">Search</span><span class="t mn" style="left:130.5px;top:30px;letter-spacing:-0.449px;">View</span><span class="t mn" style="left:170px;top:30px;letter-spacing:-0.193px;">Encoding</span><span class="t mn" style="left:233.5px;top:30px;letter-spacing:-0.299px;">Language</span><span class="t mn" style="left:299.5px;top:30px;letter-spacing:-0.232px;">Settings</span><span class="t mn" style="left:356px;top:30px;letter-spacing:-0.169px;">Macro</span><span class="t mn" style="left:404px;top:30px;letter-spacing:-0.839px;">Run</span><span class="t mn" style="left:438.5px;top:30px;letter-spacing:-0.123px;">Plugins</span><span class="t mn" style="left:491.5px;top:30px;letter-spacing:0.135px;">Window</span><span class="t mn" style="left:549.5px;top:30px;letter-spacing:-2.188px;">?</span><div class="tbi"><svg class="ic" style="left:23px" width="16" height="16" viewBox="0 0 16 16"><path d="M1 0.5h9l3 3v12h-12z" fill="#ffffff" stroke="#d4d6dc" stroke-width="1"/><path d="M10 0.5v3h3" fill="#e8e8e8" stroke="#d4d6dc" stroke-width=".8"/><circle cx="11.8" cy="12.6" r="3.3" fill="#3c9e38" stroke="#2f8030" stroke-width=".5"/><path d="M9.800 12.600h4M11.800 10.600v4" stroke="#fff" stroke-width="1.500"/></svg><svg class="ic" style="left:46px" width="16" height="16" viewBox="0 0 16 16"><path d="M5.600 .8h6.400l3 3v7.400h-9.400z" fill="#d3e3fb" stroke="#5f90dc" stroke-width="1"/><path d="M-.4 5.400h4.600l1.200 1.400h7.200v8.600h-13z" fill="#f8cf6a" stroke="#e0962c" stroke-width="1"/><path d="M.4 9.400h11.400v5.200h-11.400z" fill="#fbe08e"/><path d="M.4 9.400h11.400" stroke="#f3b44c" stroke-width=".8"/></svg><svg class="ic" style="left:69px" width="16" height="16" viewBox="0 0 16 16"><rect x="-0.4" y="0.5" width="15.2" height="15.2" rx=".6" fill="#6b9ae4" stroke="#2f62bc" stroke-width="1.2"/><rect x="2.94" y="1.1" width="8.51" height="5.47" fill="#dce8fb" opacity=".85"/><rect x="7.20" y="1.5" width="1.52" height="3.34" fill="#2f62bc"/><rect x="2.34" y="9.32" width="9.73" height="4.56" fill="#dce8fb"/><rect x="3.40" y="10.53" width="7.60" height="2.43" fill="#7cc04a"/></svg><svg class="ic" style="left:92px" width="16" height="16" viewBox="0 0 16 16"><rect x="0.6" y="0.6" width="8.5" height="8.5" rx=".6" fill="#e6eefa" stroke="#6a92d4" stroke-width="0.9"/><rect x="2.47" y="1.2" width="4.76" height="3.06" fill="#ffffff" opacity=".85"/><rect x="4.85" y="1.6" width="0.85" height="1.87" fill="#6a92d4"/><rect x="2.13" y="5.53" width="5.44" height="2.55" fill="#ffffff"/><rect x="2.73" y="6.21" width="4.25" height="1.36" fill="#e6eefa"/><rect x="2.8" y="2.6" width="9" height="9" rx=".6" fill="#e6eefa" stroke="#6a92d4" stroke-width="0.9"/><rect x="4.78" y="3.2" width="5.04" height="3.24" fill="#ffffff" opacity=".85"/><rect x="7.30" y="3.6" width="0.90" height="1.98" fill="#6a92d4"/><rect x="4.42" y="7.82" width="5.76" height="2.70" fill="#ffffff"/><rect x="5.05" y="8.54" width="4.50" height="1.44" fill="#e6eefa"/><rect x="5" y="5" width="10" height="10" rx=".6" fill="#6f9fe6" stroke="#3f72c4" stroke-width="1"/><rect x="7.20" y="5.6" width="5.60" height="3.60" fill="#d8e6fa" opacity=".85"/><rect x="10.00" y="6" width="1.00" height="2.20" fill="#3f72c4"/><rect x="6.80" y="10.80" width="6.40" height="3.00" fill="#d8e6fa"/><rect x="7.50" y="11.60" width="5.00" height="1.60" fill="#7cc04a"/></svg><svg class="ic" style="left:115px" width="16" height="16" viewBox="0 0 16 16"><path d="M0.6 1h8.8l3 3v11.5h-11.8z" fill="#ffffff" stroke="#c6c8cf" stroke-width="1"/><path d="M9.4 1v3h3" fill="#e8e8e8" stroke="#c6c8cf" stroke-width=".8"/><path d="M2.500 4.500h5M2.500 6.500h7.500M2.500 8.500h7.500M2.500 10.500h5M2.500 12.500h4" stroke="#a4a4a8" stroke-width=".9"/><circle cx="11.700" cy="12.500" r="3.400" fill="#e4631a" stroke="#c0500e" stroke-width=".6"/><path d="M9.700 12.500h4" stroke="#fff" stroke-width="1.500"/></svg><svg class="ic" style="left:138px" width="16" height="16" viewBox="0 0 16 16"><path d="M-0.4 0.6h5.3l2.2 2.2v6.8h-7.5z" fill="#ffffff" stroke="#c6c8cf" stroke-width="1"/><path d="M4.8999999999999995 0.6v2.2h2.2" fill="#e8e8e8" stroke="#c6c8cf" stroke-width=".8"/><path d="M2.5 2.5h5.3l2.2 2.2v7.3h-7.5z" fill="#ffffff" stroke="#c6c8cf" stroke-width="1"/><path d="M7.8 2.5v2.2h2.2" fill="#e8e8e8" stroke="#c6c8cf" stroke-width=".8"/><path d="M5.2 4.5h5.8l2.2 2.2v8.8h-8z" fill="#ffffff" stroke="#c6c8cf" stroke-width="1"/><path d="M11.0 4.5v2.2h2.2" fill="#e8e8e8" stroke="#c6c8cf" stroke-width=".8"/><circle cx="11.700" cy="12.500" r="3.400" fill="#e4631a" stroke="#c0500e" stroke-width=".6"/><path d="M9.700 12.500h4" stroke="#fff" stroke-width="1.500"/></svg><svg class="ic" style="left:161px" width="16" height="16" viewBox="0 0 16 16"><path d="M3.600 .6h7l2.400 2.400v4h-9.400z" fill="#c4dcfa" stroke="#4f86d8" stroke-width="1"/><rect x=".6" y="5.800" width="14.800" height="7.600" rx="2" fill="#c4c8d0" stroke="#4a505c" stroke-width="1"/><rect x="1.600" y="6.800" width="12.800" height="2" rx="1" fill="#eceef2"/><rect x="3" y="11.600" width="10" height="4" fill="#f8fbff" stroke="#4f86d8" stroke-width=".9"/><rect x="3.600" y="9.600" width="8.800" height="1.600" fill="#6a707c"/></svg><i class="sep" style="left:182px"></i><svg class="ic" style="left:192px" width="16" height="16" viewBox="0 0 16 16"><path d="M9.800 .4L6 9.800M3.800 1.600l5.800 8" stroke="#979797" stroke-width="2.300" fill="none"/><circle cx="3.800" cy="12" r="2.200" fill="none" stroke="#979797" stroke-width="2"/><circle cx="11" cy="11.600" r="2.200" fill="none" stroke="#979797" stroke-width="2"/></svg><svg class="ic" style="left:215px" width="16" height="16" viewBox="0 0 16 16"><path d="M-.4 1h6l3 3v7h-9z" fill="#cdcdcd" stroke="#9a9a9a" stroke-width="1.200"/><path d="M5.600 4.200h6l3 3v8.200h-9z" fill="#a4a4a4" stroke="#cfcfcf" stroke-width="1"/></svg><svg class="ic" style="left:238px" width="16" height="16" viewBox="0 0 16 16"><rect x="-.4" y="1.400" width="10.600" height="13.800" rx="1" fill="#999999"/><rect x="2.600" y=".4" width="4.600" height="2.400" fill="#8c8c8c"/><path d="M5.800 4.800h6l3 3v7.800h-9z" fill="#9c9c9c" stroke="#d0d0d0" stroke-width="1"/></svg><i class="sep" style="left:259px"></i><svg class="ic" style="left:269px" width="16" height="16" viewBox="0 0 16 16"><path d="M.2 11.600L5 7.600V10.200H9.500A2.300 2.300 0 0 0 9.500 5.600H2V2.800H9.500A5.100 5.100 0 0 1 9.500 13H5V15.600Z" fill="#63b53e" stroke="#479a2c" stroke-width=".7"/></svg><svg class="ic" style="left:292px" width="16" height="16" viewBox="0 0 16 16"><path d="M15.200 5.400L10 1.200V3.800H6A5.300 5.300 0 0 0 6 14.400H13V11.200H6.500A2.100 2.100 0 0 1 6.500 7H10V9.600Z" fill="#9a9a9a" stroke="#8e8e8e" stroke-width=".6"/></svg><i class="sep" style="left:313px"></i><svg class="ic" style="left:323px" width="16" height="16" viewBox="0 0 16 16"><rect x="1.400" y="2" width="3.600" height="4.400" fill="#5a5a5a"/><rect x="8.400" y="2" width="3.600" height="4.400" fill="#5a5a5a"/><rect x="5.200" y="5.600" width="3" height="3.600" fill="#444"/><rect x="0" y="5.800" width="6.200" height="8.400" rx=".8" fill="#1c1c1c"/><rect x="7.200" y="5.800" width="6.200" height="8.400" rx=".8" fill="#1c1c1c"/><rect x=".8" y="8.600" width="4.600" height="1" fill="#8a8a8a"/><rect x="8" y="8.600" width="4.600" height="1" fill="#8a8a8a"/><rect x="1.200" y="11" width="3.800" height="1.800" fill="#d4d4d4"/><rect x="8.400" y="11" width="3.800" height="1.800" fill="#d4d4d4"/></svg><svg class="ic" style="left:346px" width="16" height="16" viewBox="0 0 16 16"><text x="-1" y="7.800" font-family="Liberation Serif,serif" font-size="12" font-weight="bold" font-style="italic" fill="#2a6ad8">b</text><text x="6" y="15" font-family="Liberation Serif,serif" font-size="13" font-weight="bold" font-style="italic" fill="#2a6ad8">a</text><path d="M4.400 5l3 3.400" stroke="#3f9a3a" stroke-width="1.500"/><path d="M8.800 9.800l-3.400-.8 2.600-2.400z" fill="#3f9a3a"/><path d="M3.600 11.500q1.600 3.400 4.200 2.600" stroke="#2a6ad8" stroke-width="1.200" fill="none"/></svg><i class="sep" style="left:367px"></i><svg class="ic" style="left:377px" width="16" height="16" viewBox="0 0 16 16"><circle cx="4.800" cy="5.800" r="4.200" fill="#d3e6fb" stroke="#8fb2e0" stroke-width="1.200"/><path d="M8.600 10.200l4 4.400" stroke="#bd8c48" stroke-width="2.600" stroke-linecap="round"/><path d="M6.600 6.600h6.800M10 3.200v6.800" stroke="#3c9e3c" stroke-width="2.800"/></svg><svg class="ic" style="left:400px" width="16" height="16" viewBox="0 0 16 16"><circle cx="4.800" cy="5.800" r="4.200" fill="#d3e6fb" stroke="#8fb2e0" stroke-width="1.200"/><path d="M8.600 10.200l4 4.400" stroke="#bd8c48" stroke-width="2.600" stroke-linecap="round"/><path d="M6 6.800h7.400" stroke="#e02a34" stroke-width="2.800"/></svg><i class="sep" style="left:421px"></i><svg class="ic" style="left:431px" width="16" height="16" viewBox="0 0 16 16"><rect x="-.4" y=".5" width="13.400" height="11.500" fill="#fff" stroke="#4f7fcf" stroke-width="1"/><rect x=".1" y="1" width="12.400" height="2" fill="#bcd5f4"/><path d="M5.500 3v9" stroke="#4f7fcf" stroke-width="1"/><path d="M7.6000000000000005 9.0v-2a2.700 2.700 0 0 1 5.400 0v2" fill="none" stroke="#a4a4a4" stroke-width="1.700"/><rect x="5.4" y="8.6" width="9.800" height="7" rx=".8" fill="#f4c44a" stroke="#d39e22" stroke-width=".8"/><rect x="6.2" y="9.399999999999999" width="8.200" height="2" fill="#f9dc8a"/><rect x="9.4" y="10.6" width="1.800" height="2.600" fill="#a87b10"/></svg><svg class="ic" style="left:454px" width="16" height="16" viewBox="0 0 16 16"><rect x="-.4" y=".5" width="13.400" height="11.500" fill="#fff" stroke="#4f7fcf" stroke-width="1"/><rect x=".1" y="1" width="12.400" height="2" fill="#bcd5f4"/><path d="M-.4 7h13.400" stroke="#4f7fcf" stroke-width="1"/><path d="M7.6000000000000005 9.0v-2a2.700 2.700 0 0 1 5.400 0v2" fill="none" stroke="#a4a4a4" stroke-width="1.700"/><rect x="5.4" y="8.6" width="9.800" height="7" rx=".8" fill="#f4c44a" stroke="#d39e22" stroke-width=".8"/><rect x="6.2" y="9.399999999999999" width="8.200" height="2" fill="#f9dc8a"/><rect x="9.4" y="10.6" width="1.800" height="2.600" fill="#a87b10"/></svg><i class="sep" style="left:475px"></i><svg class="ic" style="left:485px" width="16" height="16" viewBox="0 0 16 16"><path d="M-1 2.600h9M-1 5h9M-1 7.400h6" stroke="#1a1a1a" stroke-width="1.200"/><path d="M-1 12.400h9.500" stroke="#6b9be6" stroke-width="2"/><path d="M7 7.400h7v5h-2.500" fill="none" stroke="#3f7be0" stroke-width="1.200"/><path d="M9.800 12.400l2.600-2.200v4.400z" fill="#3f7be0"/></svg><svg class="ic" style="left:508px" width="16" height="16" viewBox="0 0 16 16"><text x="1.200" y="13.400" font-family="Liberation Sans,sans-serif" font-size="16" font-weight="bold" fill="#5896f2">¶</text></svg><i class="actbtn" style="left:527px"></i><svg class="ic" style="left:531px" width="16" height="16" viewBox="0 0 16 16"><path d="M2 1.300h14M7 3.500h4M7 5.700h9M7 8h6M2 10.400h14M2 12.600h8M7 14.700h1.600" stroke="#2a8cf8" stroke-width="1.500"/><path d="M4.600 2.800v7" stroke="#e01919" stroke-width="1.500" stroke-dasharray="1.300 1"/></svg><svg class="ic" style="left:554px" width="16" height="16" viewBox="0 0 16 16"><rect x="-.4" y="1.500" width="13.800" height="11.600" fill="#fff" stroke="#4b7dcd" stroke-width="1"/><rect x=".1" y="2" width="12.800" height="2.400" fill="#9dc0f0"/><path d="M5 5h7l-2.600 3h2.600l-8 6.800 2.200-4.800h-3.200z" fill="#f0c83c" stroke="#d8a820" stroke-width=".5"/></svg><svg class="ic" style="left:577px" width="16" height="16" viewBox="0 0 16 16"><rect x="-.5" y=".5" width="15" height="15" fill="#dbe27a" stroke="#50506e" stroke-width=".9"/><path d="M0 10l4-2 3 3 4-1 3.500 2v3h-14.500z" fill="#98cc74"/><path d="M8 1h6.500v5.500l-3 .5-2-3z" fill="#a9d2ee"/><path d="M0 1h4l2 4-3 2-3-1z" fill="#c4dc84"/><path d="M2.600 1l4 7 4.400 7M14 8.600l-5 3.200-4 3.200" stroke="#e8483a" stroke-width="1.300" fill="none"/></svg><svg class="ic" style="left:600px" width="16" height="16" viewBox="0 0 16 16"><path d="M2.5 0.5h9.0l3.5 3.5v11.5h-12.5z" fill="#ffffff" stroke="#9c9c9c" stroke-width="1"/><path d="M11.5 0.5v3.5h3.5" fill="#e8e8e8" stroke="#9c9c9c" stroke-width=".8"/><path d="M.8 13.600l3-1.600 2.400-6 2.800-3.600" fill="none" stroke="#dc2a3a" stroke-width="2.400"/><path d="M2.600 8.600l5-1.600" stroke="#dc2a3a" stroke-width="1.800"/><path d="M10.600 8h-1.200v5h1.200M12.400 8h1.200v5h-1.200" fill="none" stroke="#7a9a98" stroke-width="1"/></svg><i class="sep" style="left:621px"></i><svg class="ic" style="left:631px" width="16" height="16" viewBox="0 0 16 16"><rect x=".5" y="1.500" width="12" height="12" fill="#eeeef2" stroke="#8e8e8e" stroke-width="1"/><g transform="translate(-1.500,-.5)"><circle cx="8" cy="8" r="3.200" fill="#c80000"/></g></svg><svg class="ic" style="left:654px" width="16" height="16" viewBox="0 0 16 16"><rect x=".5" y="1.500" width="12" height="12" fill="#eeeef2" stroke="#8e8e8e" stroke-width="1"/><g transform="translate(-1.500,-.5)"><rect x="4.500" y="4.500" width="7" height="7" fill="#000"/></g></svg><svg class="ic" style="left:677px" width="16" height="16" viewBox="0 0 16 16"><rect x=".5" y="1.500" width="12" height="12" fill="#eeeef2" stroke="#8e8e8e" stroke-width="1"/><g transform="translate(-1.500,-.5)"><path d="M6 4.200l4.400 3.800-4.400 3.800z" fill="#5c9af2" stroke="#3a78d8" stroke-width=".7"/></g></svg><svg class="ic" style="left:700px" width="16" height="16" viewBox="0 0 16 16"><rect x=".5" y="1.500" width="12" height="12" fill="#eeeef2" stroke="#8e8e8e" stroke-width="1"/><g transform="translate(-1.500,-.5)"><path d="M4 4.400l3.800 3.600-3.800 3.600zM8.200 4.400l3.800 3.600-3.800 3.600z" fill="#5c9af2" stroke="#3a78d8" stroke-width=".6"/></g></svg><svg class="ic" style="left:723px" width="16" height="16" viewBox="0 0 16 16"><rect x="-.1" y=".5" width="12.200" height="12.600" fill="#eef4fd" stroke="#82aae4" stroke-width="1"/><rect x=".4" y="1.600" width="11.200" height="1.600" fill="#8cc672"/><path d="M-.1 5.400h12.200M-.1 7.800h12.200M-.1 10.200h12.200M3.600 3.200v9.900M7.400 3.200v9.900" stroke="#9fc0ec" stroke-width=".8"/><rect x="6.2" y="6.8" width="8.6" height="8.6" rx=".6" fill="#7aa7e8" stroke="#3f6fc0" stroke-width="1.2"/><rect x="8.09" y="7.3999999999999995" width="4.82" height="3.10" fill="#ffffff" opacity=".85"/><rect x="10.50" y="7.8" width="0.86" height="1.89" fill="#3f6fc0"/><rect x="7.75" y="11.79" width="5.50" height="2.58" fill="#ffffff"/><rect x="8.35" y="12.48" width="4.30" height="1.38" fill="#8fca62"/></svg><i class="sep" style="left:744px"></i><i class="actbtn" style="left:750px"></i><svg class="ic" style="left:754px" width="16" height="16" viewBox="0 0 16 16"><text x="8.600" y="8" text-anchor="middle" font-family="Liberation Serif,serif" font-size="8.500" font-weight="bold" fill="#000" textLength="15.600" lengthAdjust="spacingAndGlyphs">ABC</text><path d="M1.200 11.600q1.700-2.400 3.400-.4t3.400 0 3.400-.2 3.800-.8" fill="none" stroke="#f4a0a0" stroke-width="4"/><path d="M1.200 11.600q1.700-2.400 3.400-.4t3.400 0 3.400-.2 3.800-.8" fill="none" stroke="#ea2a2a" stroke-width="1.800"/></svg><svg class="ic" style="left:777px" width="16" height="16" viewBox="0 0 16 16"><path d="M.5 2.500h4.500l1.200 1.400h7.800v8h-13.500z" fill="#fbe49a" stroke="#dcb83c" stroke-width="1"/><path d="M2.500 6h8.500M2.500 8h8.500" stroke="#f0a04a" stroke-width="1"/><rect x="4" y="10.400" width="6.200" height="4.200" rx="2.100" fill="none" stroke="#4a4a4a" stroke-width="1.600"/><rect x="8.600" y="10.400" width="6.200" height="4.200" rx="2.100" fill="none" stroke="#4a4a4a" stroke-width="1.600"/><path d="M7 12.500h4.600" stroke="#d8d8d8" stroke-width="1"/></svg></div><div class="tab ina" style="left:12px;width:83px;border-right:none"></div><div class="tab act" style="left:96px;width:93px"><i class="or"></i></div><svg class="tic" style="left:15px" width="13" height="13" viewBox="0 0 13 13"><rect x="0.6" y="0.6" width="11.8" height="11.8" rx=".6" fill="#74a4e4" stroke="#4f86d2" stroke-width="1.2"/><rect x="3.20" y="1.2" width="6.61" height="4.25" fill="#d7dfe8" opacity=".85"/><rect x="6.50" y="1.6" width="1.18" height="2.60" fill="#4f86d2"/><rect x="2.72" y="7.44" width="7.55" height="3.54" fill="#d7dfe8"/><rect x="3.55" y="8.39" width="5.90" height="1.89" fill="#7fb0a0"/></svg><span class="t tb tbi2" style="left:31px;top:82px;letter-spacing:-0.820px;">index.html</span><svg class="tcl" style="left:82px" width="11" height="11" viewBox="0 0 11 11"><rect width="11" height="11" fill="#b4b4b4"/><rect x="1" y="1" width="9" height="9" fill="#9c9c9c"/><path d="M2.800 2.800l5.400 5.400M8.200 2.800l-5.400 5.400" stroke="#e6e6e6" stroke-width="1.900"/></svg><svg class="tic" style="left:101px" width="13" height="13" viewBox="0 0 13 13"><rect x="0.6" y="0.6" width="11.8" height="11.8" rx=".6" fill="#ee5a5a" stroke="#d62a2a" stroke-width="1.2"/><rect x="3.20" y="1.2" width="6.61" height="4.25" fill="#ffffff" opacity=".85"/><rect x="6.50" y="1.6" width="1.18" height="2.60" fill="#d62a2a"/><rect x="2.72" y="7.44" width="7.55" height="3.54" fill="#ffffff"/><rect x="3.55" y="8.39" width="5.90" height="1.89" fill="#f08a8a"/></svg><span class="t tb" style="left:117px;top:82px;letter-spacing:-0.625px;">default.css</span><svg class="tcl" style="left:174px" width="11" height="11" viewBox="0 0 11 11"><rect width="11" height="11" fill="#c58a9c"/><rect x="1" y="1" width="9" height="9" fill="#a8405e"/><path d="M2.800 2.800l5.400 5.400M8.200 2.800l-5.400 5.400" stroke="#fff" stroke-width="1.900"/></svg><div class="edb" style="width:682px;height:477px"></div><div class="ed" style="width:676px;height:473px"><div class="lnm" style="height:473px"></div><div class="fdm" style="height:473px"></div><i class="cur" style="top:442px"></i><span class="ln" style="top:0px">1</span><span class="cl" style="top:0px"><span class="tg">body</span></span><span class="ln" style="top:17px">2</span><span class="cl" style="top:17px"><span class="op">{</span></span><span class="ln" style="top:34px">3</span><span class="cl" style="top:34px">    <span class="pr">background-image</span><span class="op">:</span><span class="vl"> url(&quot;../images/background.</span><span class="sq"><span class="vl">jpg</span><svg class="sqv" width="21" height="3" viewBox="0 0 21 3"><path d="M0 2.500L2 0.5L4 2.5L6 0.5L8 2.5L10 0.5L12 2.5L14 0.5L16 2.5L18 0.5L20 2.5L22 0.5" fill="none" stroke="#ff0000" stroke-width="1.3"/></svg></span><span class="vl">&quot;);</span></span><span class="ln" style="top:51px">4</span><span class="cl" style="top:51px"><span class="op">}</span></span><span class="ln" style="top:68px">5</span><span class="ln" style="top:85px">6</span><span class="cl" style="top:85px"><span class="op">#</span><span class="idn">main_page</span></span><span class="ln" style="top:102px">7</span><span class="cl" style="top:102px"><span class="op">{</span></span><span class="ln" style="top:119px">8</span><span class="cl" style="top:119px">    <span class="pr">width</span><span class="op">:</span><span class="vl">90%;</span></span><span class="ln" style="top:136px">9</span><span class="cl" style="top:136px">    <span class="pr">margin-left</span><span class="op">:</span><span class="vl"> 5%;</span></span><span class="ln" style="top:153px">10</span><span class="cl" style="top:153px">    <span class="pr">margin-top</span><span class="op">:</span><span class="vl"> 5%;</span></span><span class="ln" style="top:170px">11</span><span class="cl" style="top:170px">    <span class="pr">min-height</span><span class="op">:</span><span class="vl">1060px;</span></span><span class="ln" style="top:187px">12</span><span class="cl" style="top:187px">    <span class="pr">min-width</span><span class="op">:</span><span class="vl"> 800px;</span></span><span class="ln" style="top:204px">13</span><span class="cl" style="top:204px">    <span class="pr">height</span><span class="op">:</span><span class="vl"> 1090px;</span></span><span class="ln" style="top:221px">14</span><span class="cl" style="top:221px">    <span class="pr">border-radius</span><span class="op">:</span><span class="vl"> 8px;</span></span><span class="ln" style="top:238px">15</span><span class="cl" style="top:238px">    <span class="pr">box-shadow</span><span class="op">:</span><span class="vl"> 5px 5px 5px #898989;</span></span><span class="ln" style="top:255px">16</span><span class="cl" style="top:255px">    <span class="pr">background-color</span><span class="op">:</span><span class="vl"> lightblue;</span></span><span class="ln" style="top:272px">17</span><span class="cl" style="top:272px"><span class="op">}</span></span><span class="ln" style="top:289px">18</span><span class="ln" style="top:306px">19</span><span class="cl" style="top:306px"><span class="op">#</span><span class="idn">last_line</span></span><span class="ln" style="top:323px">20</span><span class="cl" style="top:323px"><span class="br">{</span></span><span class="ln" style="top:340px">21</span><span class="cl" style="top:340px">    <span class="pr">margin-top</span><span class="op">:</span><span class="vl"> 8px;</span></span><span class="ln" style="top:357px">22</span><span class="cl" style="top:357px">    <span class="pr">height</span><span class="op">:</span><span class="vl">20px;</span></span><span class="ln" style="top:374px">23</span><span class="cl" style="top:374px">    <span class="pr">width</span><span class="op">:</span><span class="vl">100%;</span></span><span class="ln" style="top:391px">24</span><span class="cl" style="top:391px">    <span class="pr">font-family</span><span class="op">:</span><span class="vl"> helvetica, verdana, sans-serif;</span></span><span class="ln" style="top:408px">25</span><span class="cl" style="top:408px">    <span class="pr">font-size</span><span class="op">:</span><span class="vl"> smaller;</span></span><span class="ln" style="top:425px">26</span><span class="cl" style="top:425px">    <span class="pr">text-align</span><span class="op">:</span><span class="vl"> center;</span></span><span class="ln" style="top:442px">27</span><span class="cl" style="top:442px"><span class="br brw">}</span><i class="caret"></i></span><div class="fold"><i class="fv" style="top:30px;height:30px;background:#808080"></i><i class="fh" style="top:59px;width:6px;background:#808080"></i><svg class="fb" style="top:20px" width="11" height="11" viewBox="0 0 11 11"><rect x=".5" y=".5" width="10" height="10" fill="#fff" stroke="#808080" stroke-width="1"/><path d="M2 5.500h7" stroke="#606060" stroke-width="1.200"/></svg><i class="fv" style="top:115px;height:166px;background:#808080"></i><i class="fh" style="top:280px;width:6px;background:#808080"></i><svg class="fb" style="top:105px" width="11" height="11" viewBox="0 0 11 11"><rect x=".5" y=".5" width="10" height="10" fill="#fff" stroke="#808080" stroke-width="1"/><path d="M2 5.500h7" stroke="#606060" stroke-width="1.200"/></svg><i class="fv" style="top:336px;height:115px;background:#ff0000"></i><i class="fh" style="top:450px;width:6px;background:#ff0000"></i><svg class="fb" style="top:326px" width="11" height="11" viewBox="0 0 11 11"><rect x=".5" y=".5" width="10" height="10" fill="#fff" stroke="#ff0000" stroke-width="1.4"/><path d="M2 5.500h7" stroke="#ff0000" stroke-width="1.200"/></svg></div></div><div class="sb" style="top:578px;width:684px"><i class="sbsep" style="left:143px"></i><i class="sbsep" style="left:343px"></i><span class="t st_" style="left:2px;top:4px;letter-spacing:-0.350px;">Cascade Style Sheets File</span><span class="t st_" style="left:148.5px;top:4px;letter-spacing:-0.227px;">length : 439</span><span class="t st_" style="left:221px;top:4px;letter-spacing:-0.353px;">lines : 27</span><span class="t st_" style="left:349px;top:4px;letter-spacing:-0.529px;">Ln : 27</span><span class="t st_" style="left:394.5px;top:4px;letter-spacing:-0.384px;">Col : 2</span><span class="t st_" style="left:439.5px;top:4px;letter-spacing:-0.544px;">Sel : 0 | 0</span></div></div><i class="btm"></i></body></html>
